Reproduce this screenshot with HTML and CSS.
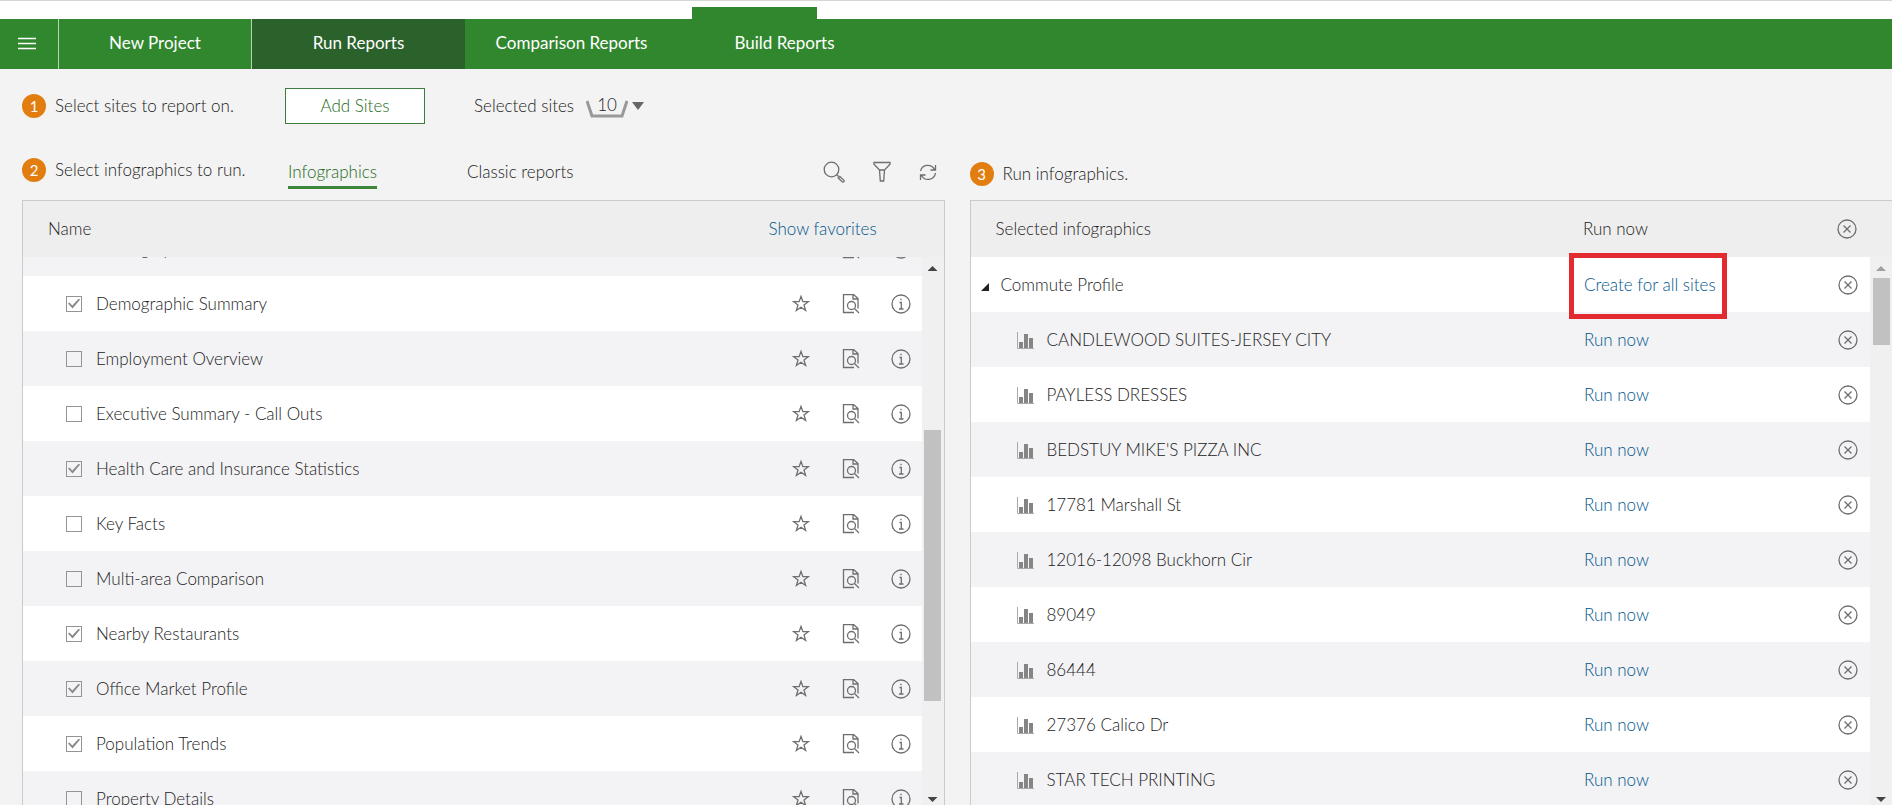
FILE: index.html
```html
<!DOCTYPE html>
<html lang="en">
  <head>
    <meta charset="UTF-8" />
    <meta name="viewport" content="width=device-width, initial-scale=1.0">
    <title>Run Reports</title>
    <link rel="stylesheet" href="styles.css">
  </head>
  <body>
    <!-- Icons -->
    <svg class="sprite" xmlns="http://www.w3.org/2000/svg">
      <symbol id="i-star" viewBox="0 0 20 20">
        <path d="M10 2.500l1.900 5.200h5.400l-4.300 3.300 1.600 5.500-4.600-3.300-4.600 3.300L7 11 2.700 7.700h5.400z"/>
      </symbol>
      <symbol id="i-preview" viewBox="0 0 20 20">
        <path d="M13 18.500H2.500v-18h10l4.500 4v10M12 .5v4.500h5"/>
        <circle cx="10.500" cy="11.500" r="4"/>
        <path d="M13.500 14.500l4.500 4.500"/>
      </symbol>
      <symbol id="i-info" viewBox="0 0 20 20">
        <circle cx="10" cy="10" r="9"/>
        <path d="M8.500 8.500H10.300v6.500M8 15h4.500M10 4.800v1.500"/>
      </symbol>
      <symbol id="i-close" viewBox="0 0 20 20">
        <circle cx="10" cy="10" r="9"/>
        <path d="M6.500 6.500l7 7M13.500 6.500l-7 7"/>
      </symbol>
      <symbol id="i-chart" viewBox="0 0 18 18">
        <path class="axis" d="M1.500 0v16.500H18"/>
        <path class="bars" d="M3 10h4v6H3zM8 2h4v14H8zM13 6h4v10h-4z"/>
      </symbol>
    </svg>

    <div class="top-strip"><div class="active-tab"></div></div>

    <nav class="navbar">
      <button class="menu-btn" aria-label="Menu">
        <svg width="18" height="14" viewBox="0 0 18 14"><path d="M0 1.500h18M0 6.500h18M0 11.500h18"/></svg>
      </button>
      <a class="nav-item nav-project" href="#">New Project</a>
      <a class="nav-item active" href="#">Run Reports</a>
      <a class="nav-item" href="#">Comparison Reports</a>
      <a class="nav-item" href="#">Build Reports</a>
    </nav>

    <div class="sites-row">
      <div class="step"><span class="num">1</span>Select sites to report on.</div>
      <button class="add-btn">Add Sites</button>
      <span class="sites-label" id="sitesLabel">Selected sites</span>
      <button class="sites-count" aria-describedby="sitesLabel">
        <span class="tray">
          <svg width="42" height="20" viewBox="0 0 42 20"><path d="M1 2l5 15h30l5-15"/></svg>
          <span class="tray-value">10</span>
        </span>
        <svg class="caret" width="12" height="8" viewBox="0 0 12 8"><path d="M0 0h12L6 8z"/></svg>
      </button>
    </div>

    <main class="columns">
      <section class="column">
        <div class="toolbar">
          <div class="step"><span class="num">2</span>Select infographics to run.</div>
          <div class="tabs">
            <a class="tab selected" href="#">Infographics</a>
            <a class="tab" href="#">Classic reports</a>
          </div>
          <div class="tools">
            <button class="icon-btn" aria-label="Search">
              <svg width="22" height="22" viewBox="0 0 22 22"><circle cx="8.500" cy="8.500" r="7.300"/><path d="M13.500 13.500l2 2M15.200 17l1.600-1.600 4 3.700q.9 1-.1 1.600-.8.700-1.500.1z"/></svg>
            </button>
            <button class="icon-btn" aria-label="Filter">
              <svg width="18" height="22" viewBox="0 0 18 22"><path d="M1 1.500h16v1.700L11.500 9l-.8 11H7.300L6.500 9 1 3.200zM6.500 9h5"/></svg>
            </button>
            <button class="icon-btn" aria-label="Refresh">
              <svg width="18" height="22" viewBox="0 0 18 22"><path d="M1.500 10A7.500 7.500 0 0 1 15.500 8.500M16.500 4v5h-5M16.500 12A7.500 7.500 0 0 1 2.500 14.500M1.500 19v-5h5"/></svg>
            </button>
          </div>
        </div>
        <div class="panel">
          <div class="panel-head">
            <span class="head-name">Name</span>
            <a class="favorites" href="#">Show favorites</a>
          </div>
          <div class="panel-body">
            <div class="viewport">
              <table class="list scrolled">
                <tr>
                  <td class="name"><label><input type="checkbox">Demographic Profile</label></td>
                  <td class="act"><svg class="icon"><use href="#i-star"/></svg></td>
                  <td class="act"><svg class="icon"><use href="#i-preview"/></svg></td>
                  <td class="act"><svg class="icon"><use href="#i-info"/></svg></td>
                </tr>
                <tr>
                  <td class="name"><label><input type="checkbox" checked>Demographic Summary</label></td>
                  <td class="act"><svg class="icon"><use href="#i-star"/></svg></td>
                  <td class="act"><svg class="icon"><use href="#i-preview"/></svg></td>
                  <td class="act"><svg class="icon"><use href="#i-info"/></svg></td>
                </tr>
                <tr>
                  <td class="name"><label><input type="checkbox">Employment Overview</label></td>
                  <td class="act"><svg class="icon"><use href="#i-star"/></svg></td>
                  <td class="act"><svg class="icon"><use href="#i-preview"/></svg></td>
                  <td class="act"><svg class="icon"><use href="#i-info"/></svg></td>
                </tr>
                <tr>
                  <td class="name"><label><input type="checkbox">Executive Summary - Call Outs</label></td>
                  <td class="act"><svg class="icon"><use href="#i-star"/></svg></td>
                  <td class="act"><svg class="icon"><use href="#i-preview"/></svg></td>
                  <td class="act"><svg class="icon"><use href="#i-info"/></svg></td>
                </tr>
                <tr>
                  <td class="name"><label><input type="checkbox" checked>Health Care and Insurance Statistics</label></td>
                  <td class="act"><svg class="icon"><use href="#i-star"/></svg></td>
                  <td class="act"><svg class="icon"><use href="#i-preview"/></svg></td>
                  <td class="act"><svg class="icon"><use href="#i-info"/></svg></td>
                </tr>
                <tr>
                  <td class="name"><label><input type="checkbox">Key Facts</label></td>
                  <td class="act"><svg class="icon"><use href="#i-star"/></svg></td>
                  <td class="act"><svg class="icon"><use href="#i-preview"/></svg></td>
                  <td class="act"><svg class="icon"><use href="#i-info"/></svg></td>
                </tr>
                <tr>
                  <td class="name"><label><input type="checkbox">Multi-area Comparison</label></td>
                  <td class="act"><svg class="icon"><use href="#i-star"/></svg></td>
                  <td class="act"><svg class="icon"><use href="#i-preview"/></svg></td>
                  <td class="act"><svg class="icon"><use href="#i-info"/></svg></td>
                </tr>
                <tr>
                  <td class="name"><label><input type="checkbox" checked>Nearby Restaurants</label></td>
                  <td class="act"><svg class="icon"><use href="#i-star"/></svg></td>
                  <td class="act"><svg class="icon"><use href="#i-preview"/></svg></td>
                  <td class="act"><svg class="icon"><use href="#i-info"/></svg></td>
                </tr>
                <tr>
                  <td class="name"><label><input type="checkbox" checked>Office Market Profile</label></td>
                  <td class="act"><svg class="icon"><use href="#i-star"/></svg></td>
                  <td class="act"><svg class="icon"><use href="#i-preview"/></svg></td>
                  <td class="act"><svg class="icon"><use href="#i-info"/></svg></td>
                </tr>
                <tr>
                  <td class="name"><label><input type="checkbox" checked>Population Trends</label></td>
                  <td class="act"><svg class="icon"><use href="#i-star"/></svg></td>
                  <td class="act"><svg class="icon"><use href="#i-preview"/></svg></td>
                  <td class="act"><svg class="icon"><use href="#i-info"/></svg></td>
                </tr>
                <tr>
                  <td class="name"><label><input type="checkbox">Property Details</label></td>
                  <td class="act"><svg class="icon"><use href="#i-star"/></svg></td>
                  <td class="act"><svg class="icon"><use href="#i-preview"/></svg></td>
                  <td class="act"><svg class="icon"><use href="#i-info"/></svg></td>
                </tr>
              </table>
            </div>
            <div class="scrollbar">
              <span class="arrow up"></span>
              <div class="track"><div class="thumb thumb-left"></div></div>
              <span class="arrow down"></span>
            </div>
          </div>
        </div>
      </section>

      <section class="column">
        <div class="toolbar toolbar-run">
          <div class="step"><span class="num">3</span>Run infographics.</div>
        </div>
        <div class="panel panel-run">
          <div class="panel-head">
            <span class="head-name">Selected infographics</span>
            <span class="head-run">Run now</span>
            <button class="icon-btn head-close" aria-label="Remove all"><svg class="icon"><use href="#i-close"/></svg></button>
          </div>
          <div class="panel-body">
            <div class="viewport">
              <table class="list">
                <tr>
                  <td class="group"><svg class="expander" width="8" height="8" viewBox="0 0 8 8"><path d="M8 0v8H0z"/></svg>Commute Profile</td>
                  <td class="run highlight"><a href="#">Create for all sites</a></td>
                  <td class="remove"><svg class="icon"><use href="#i-close"/></svg></td>
                </tr>
                <tr>
                  <td class="site"><svg class="chart"><use href="#i-chart"/></svg>CANDLEWOOD SUITES-JERSEY CITY</td>
                  <td class="run"><a href="#">Run now</a></td>
                  <td class="remove"><svg class="icon"><use href="#i-close"/></svg></td>
                </tr>
                <tr>
                  <td class="site"><svg class="chart"><use href="#i-chart"/></svg>PAYLESS DRESSES</td>
                  <td class="run"><a href="#">Run now</a></td>
                  <td class="remove"><svg class="icon"><use href="#i-close"/></svg></td>
                </tr>
                <tr>
                  <td class="site"><svg class="chart"><use href="#i-chart"/></svg>BEDSTUY MIKE'S PIZZA INC</td>
                  <td class="run"><a href="#">Run now</a></td>
                  <td class="remove"><svg class="icon"><use href="#i-close"/></svg></td>
                </tr>
                <tr>
                  <td class="site"><svg class="chart"><use href="#i-chart"/></svg>17781 Marshall St</td>
                  <td class="run"><a href="#">Run now</a></td>
                  <td class="remove"><svg class="icon"><use href="#i-close"/></svg></td>
                </tr>
                <tr>
                  <td class="site"><svg class="chart"><use href="#i-chart"/></svg>12016-12098 Buckhorn Cir</td>
                  <td class="run"><a href="#">Run now</a></td>
                  <td class="remove"><svg class="icon"><use href="#i-close"/></svg></td>
                </tr>
                <tr>
                  <td class="site"><svg class="chart"><use href="#i-chart"/></svg>89049</td>
                  <td class="run"><a href="#">Run now</a></td>
                  <td class="remove"><svg class="icon"><use href="#i-close"/></svg></td>
                </tr>
                <tr>
                  <td class="site"><svg class="chart"><use href="#i-chart"/></svg>86444</td>
                  <td class="run"><a href="#">Run now</a></td>
                  <td class="remove"><svg class="icon"><use href="#i-close"/></svg></td>
                </tr>
                <tr>
                  <td class="site"><svg class="chart"><use href="#i-chart"/></svg>27376 Calico Dr</td>
                  <td class="run"><a href="#">Run now</a></td>
                  <td class="remove"><svg class="icon"><use href="#i-close"/></svg></td>
                </tr>
                <tr>
                  <td class="site"><svg class="chart"><use href="#i-chart"/></svg>STAR TECH PRINTING</td>
                  <td class="run"><a href="#">Run now</a></td>
                  <td class="remove"><svg class="icon"><use href="#i-close"/></svg></td>
                </tr>
              </table>
            </div>
            <div class="scrollbar">
              <span class="arrow up disabled"></span>
              <div class="track"><div class="thumb thumb-right"></div></div>
              <span class="arrow down"></span>
            </div>
          </div>
        </div>
      </section>
    </main>
  </body>
</html>
```

FILE: styles.css
```css
*,
*::before,
*::after {
  box-sizing: border-box;
}

body {
  margin: 0;
  height: 100vh;
  display: flex;
  flex-direction: column;
  overflow: hidden;
  background: #f3f3f3;
  color: #222;
  font-family: "Avenir Next", Lato, sans-serif;
  font-size: 17px;
  font-weight: 300;
  line-height: 24px;
}

button {
  margin: 0;
  padding: 0;
  border: 0;
  background: none;
  font: inherit;
  color: inherit;
}

a {
  color: #00568c;
  text-decoration: none;
}

svg {
  display: block;
  fill: none;
  stroke: #6e6e6e;
  stroke-width: 1.3;
}

.sprite {
  position: absolute;
  width: 0;
  height: 0;
}

/* Header */
.top-strip {
  display: flex;
  align-items: flex-end;
  height: 19px;
  flex: none;
  padding-left: 692px;
  border-top: 1px solid #d6d6d6;
  background: #fff;
}

.active-tab {
  width: 125px;
  height: 12px;
  background: #31872e;
}

.navbar {
  display: flex;
  flex: none;
  height: 50px;
  background: #31872e;
  font-weight: 400;
}

.menu-btn {
  width: 59px;
  padding-left: 18px;
  border-right: 1px solid #b5d5b4;
}

.menu-btn svg {
  stroke: #fff;
}

.nav-item {
  width: 213px;
  line-height: 48px;
  text-align: center;
  color: #fff;
}

.nav-project {
  width: 193px;
  border-right: 1px solid #b5d5b4;
}

.nav-item.active {
  background: #2b622b;
}

/* Step 1 */
.sites-row {
  display: flex;
  align-items: center;
  flex: none;
  height: 74px;
  padding-left: 22px;
}

.step {
  display: flex;
  align-items: center;
  gap: 9px;
  width: 263px;
}

.num {
  width: 24px;
  height: 24px;
  border-radius: 50%;
  background: #e27d10;
  color: #fff;
  font-size: 15px;
  font-weight: 400;
  line-height: 24px;
  text-align: center;
}

.add-btn {
  width: 140px;
  height: 36px;
  border: 1px solid #3d7d3c;
  background: #fff;
  color: #1c6a1a;
}

.sites-label {
  margin-left: 49px;
  width: 112px;
}

.sites-count {
  display: flex;
  align-items: center;
  gap: 4px;
}

.tray {
  display: grid;
  justify-items: center;
  align-items: end;
}

.tray > * {
  grid-area: 1 / 1;
}

.tray svg {
  stroke: #999;
  stroke-width: 3;
}

.tray-value {
  padding-bottom: 2px;
}

.caret {
  fill: #666;
  stroke: none;
}

/* Columns */
.columns {
  display: flex;
  flex: 1;
  gap: 25px;
  min-height: 0;
  padding-left: 22px;
}

.column {
  display: flex;
  flex-direction: column;
  flex: 1 1 0;
  min-width: 0;
}

.toolbar {
  display: flex;
  align-items: center;
  flex: none;
  height: 57px;
  padding-right: 8px;
}

.toolbar .step {
  padding-bottom: 3px;
}

.toolbar-run {
  padding-top: 8px;
}

.tabs {
  display: flex;
  gap: 90px;
  margin-left: 3px;
  padding-top: 3px;
}

.tab {
  color: #222;
  line-height: 28px;
  border-bottom: 3px solid transparent;
}

.tab.selected {
  color: #1c6a1a;
  border-bottom-color: #3d853b;
}

.tools {
  display: flex;
  gap: 28px;
  margin-left: auto;
}

/* Panels */
.panel {
  display: flex;
  flex-direction: column;
  flex: 1;
  min-height: 0;
  border: 1px solid #cacaca;
  border-bottom: 0;
}

.panel-run {
  border-right: 0;
}

.panel-head {
  display: flex;
  align-items: center;
  flex: none;
  height: 56px;
  padding-left: 25px;
  background: #efeeee;
}

.head-name {
  flex: 1;
}

.favorites {
  width: 175px;
}

.head-run {
  width: 254px;
}

.head-close {
  width: 55px;
}

.panel-body {
  display: flex;
  flex: 1;
  min-height: 0;
}

.viewport {
  flex: 1;
  min-width: 0;
}

.column:first-child .viewport {
  overflow: hidden;
}

.list {
  width: 100%;
  border-collapse: collapse;
}

.scrolled {
  margin-top: -36px;
}

.list td {
  height: 55px;
  padding: 0;
}

.list tr {
  background: #fff;
}

.panel-run .list tr:nth-child(even),
.scrolled tr:nth-child(odd) {
  background: #f3f3f5;
}

.name label {
  display: flex;
  align-items: center;
  gap: 14px;
  padding-left: 43px;
}

.name input {
  appearance: none;
  display: grid;
  place-items: center;
  width: 16px;
  height: 16px;
  margin: 0;
  border: 1px solid #949494;
  background: transparent;
}

.name input:checked::before {
  content: "";
  width: 12px;
  height: 10px;
  background: #8a8a8a;
  clip-path: polygon(0 50%, 12% 40%, 36% 70%, 90% 0, 100% 12%, 38% 100%);
}

.act {
  width: 50px;
}

.act:last-child {
  width: 31px;
}

.icon {
  width: 20px;
  height: 20px;
}

.group svg,
.site svg {
  display: inline-block;
  stroke: none;
}

.group {
  text-indent: 10px;
}

.expander {
  margin-right: 12px;
}

.expander path {
  fill: #222;
}

.site {
  text-indent: 45px;
}

.chart {
  width: 18px;
  height: 18px;
  margin-right: 13px;
  vertical-align: -4px;
}

.axis {
  stroke: #aaa;
  stroke-width: 1;
}

.bars {
  fill: #858585;
}

.run {
  width: 254px;
}

.remove {
  width: 32px;
}

.highlight {
  position: relative;
}

/* Call-out around the batch link */
.highlight::after {
  content: "";
  position: absolute;
  top: -4px;
  left: -15px;
  width: 158px;
  height: 66px;
  border: 5px solid #e32a30;
  pointer-events: none;
}

/* Scrollbar */
.scrollbar {
  display: flex;
  flex-direction: column;
  align-items: center;
  width: 22px;
  background: #f0f0f0;
}

.arrow {
  width: 10px;
  height: 5px;
  margin: 9px 0 7px;
  background: #444;
}

.up {
  clip-path: polygon(50% 0, 100% 100%, 0 100%);
}

.down {
  margin: 7px 0 3px;
  clip-path: polygon(0 0, 100% 0, 50% 100%);
}

.disabled {
  background: #a0a0a0;
}

.track {
  display: flex;
  flex-direction: column;
  flex: 1;
  width: 17px;
}

.thumb {
  background: #c1c1c1;
}

.thumb-left {
  height: 53%;
  margin-top: 152px;
}

.thumb-right {
  height: 13%;
}
```
